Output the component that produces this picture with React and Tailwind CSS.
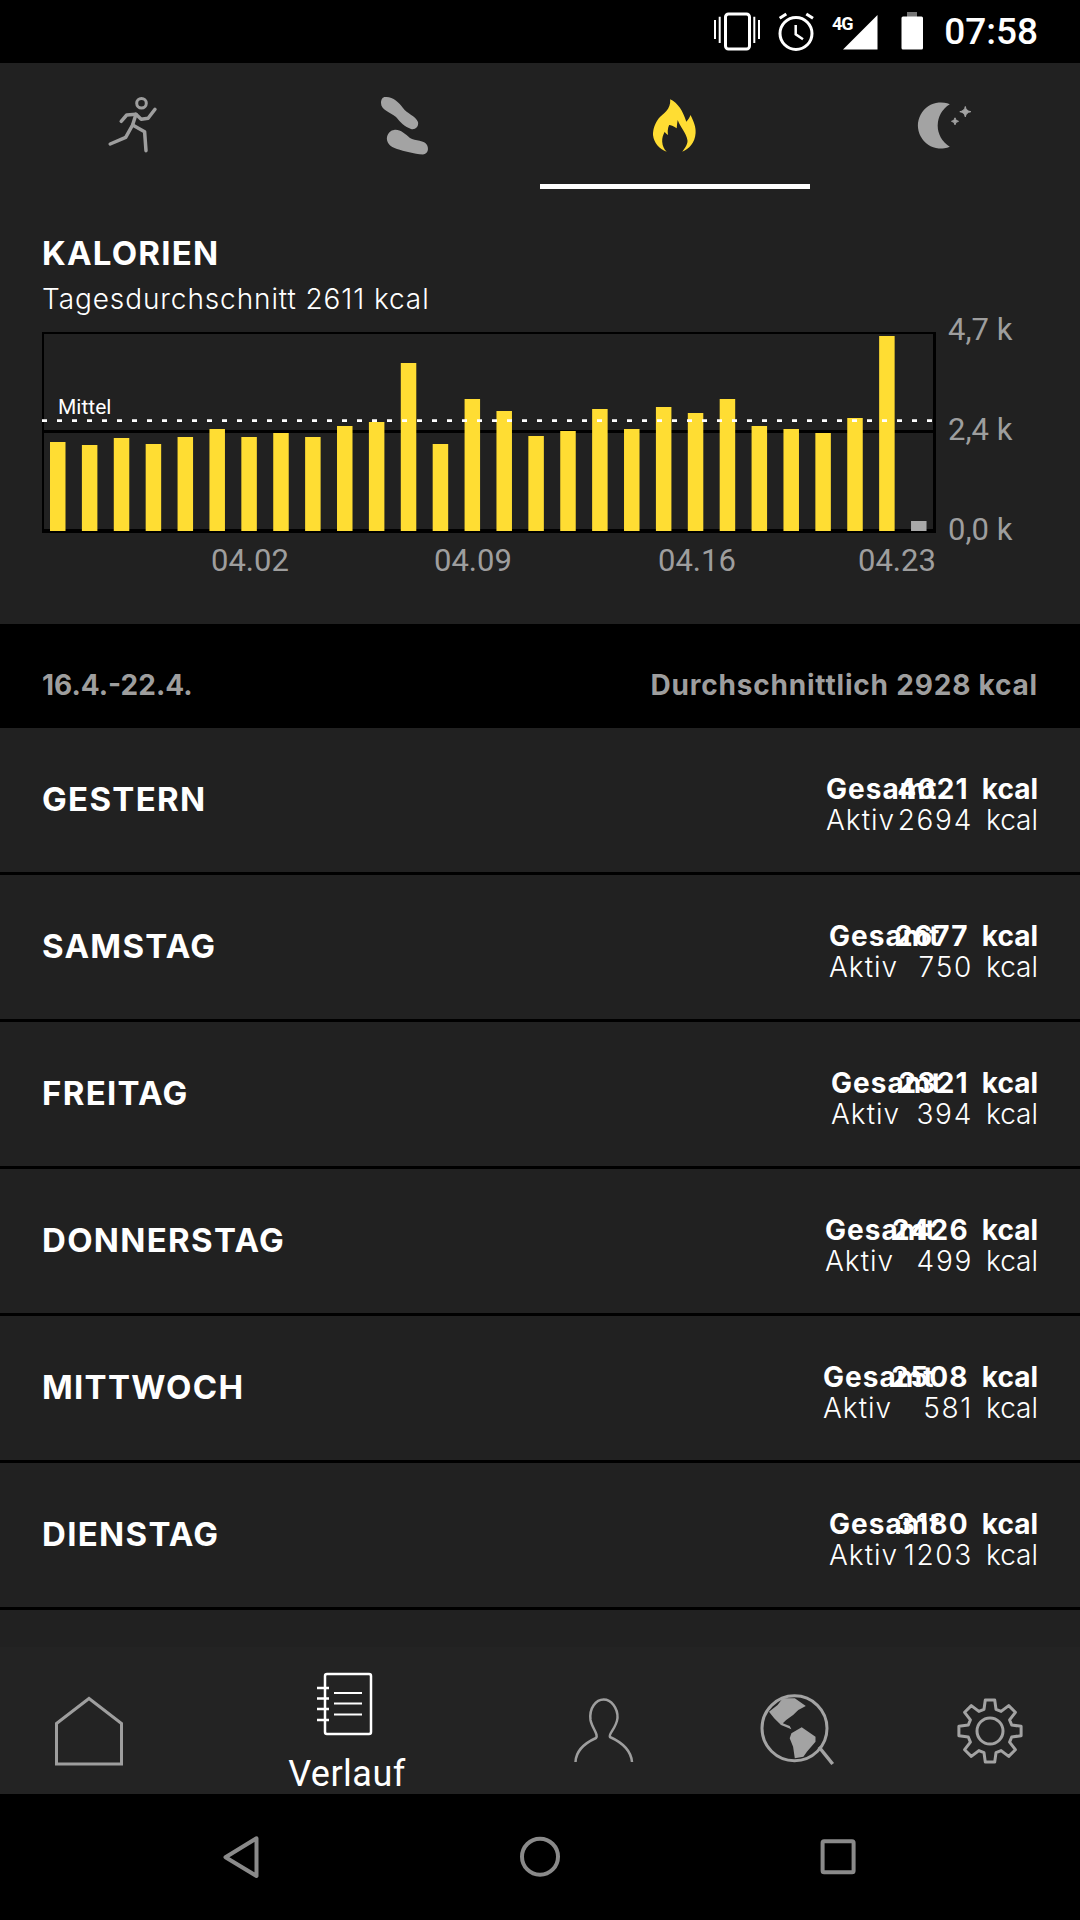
const font = { fontFamily: 'Inter, "Liberation Sans", sans-serif' }

// Daily bar tops in chart coordinates; the last day is still running, so it is grey.
const barTops = [442, 445, 438, 444, 437, 429, 437, 433, 437, 426, 422, 363, 444, 399, 411, 436, 431, 409, 429, 407, 413, 399, 426, 429, 433, 418, 336, 521]

const days = [
  { name: 'GESTERN', total: 4621, active: 2694, width: 212 },
  { name: 'SAMSTAG', total: 2677, active: 750, width: 209 },
  { name: 'FREITAG', total: 2321, active: 394, width: 207 },
  { name: 'DONNERSTAG', total: 2426, active: 499, width: 213 },
  { name: 'MITTWOCH', total: 2508, active: 581, width: 215 },
  { name: 'DIENSTAG', total: 3180, active: 1203, width: 209 },
]

function StatusIcons() {
  return (
    <svg width="220" height="63" viewBox="710 0 220 63" fill="none" aria-hidden="true">
      <rect x="726.5" y="14" width="24" height="35" rx="3" stroke="white" strokeWidth="3" />
      <path d="M716 20v19M720.7 16.7v26.3M755.3 16.7v26.3M760 20v19" stroke="white" strokeWidth="2" />
      <circle cx="797" cy="33.5" r="16" stroke="white" strokeWidth="3" />
      <path d="M780.7 18.3l6.6-4.3M814 18.3l-6.7-4.3" stroke="white" strokeWidth="3" />
      <path d="M796.7 25v9.3l7.3 5" stroke="white" strokeWidth="2.5" />
      <text x="833" y="29.5" fill="white" fontFamily="Roboto" fontWeight="700" fontSize="18" letterSpacing="-1">4G</text>
      <path d="M844 49.5L878.5 15v34.5z" fill="white" />
      <rect x="908" y="12" width="10" height="6" fill="#757575" />
      <rect x="902.5" y="16.5" width="21.5" height="33" rx="1.5" fill="white" />
    </svg>
  )
}

function RunnerIcon() {
  return (
    <svg width="80" height="80" viewBox="95 85 80 80" fill="none" stroke="#9e9e9e" strokeWidth="3.5" strokeLinecap="round" strokeLinejoin="round" aria-hidden="true">
      <circle cx="141.5" cy="103.3" r="4.8" strokeWidth="3" />
      <path d="M121.2 121.3l5.5-6.3 9.3-.7 5.2 5 6.9-1 6.9-9" />
      <path d="M136 114.3l-3.4 10.7-6.9 12.3-15.5 6.7" />
      <path d="M132.6 125l12 6.7 1.4 19" />
    </svg>
  )
}

function StepsIcon() {
  return (
    <svg width="80" height="80" viewBox="365 85 80 80" fill="#a3a3a3" aria-hidden="true">
      <path d="M385 97C392 96 399 102 403 108C406 113 416 116 418 122C419 127 415 130 411 129C405 127 400 122 396 117C390 112 381 110 381 103C381 99 383 97 385 97Z" />
      <path d="M394 130C400 129 405 134 410 138C415 141 425 140 427 145C429 149 428 154 423 154.5C414 154 404 151 397 149C390 147 386 142 387 137C388 133 391 130 394 130Z" />
    </svg>
  )
}

function FlameIcon() {
  return (
    <svg width="80" height="80" viewBox="635 85 80 80" fill="#ffdd33" aria-hidden="true">
      <path d="M670.2 99.3C678 103 683 111 686.3 121.7C688 120 689.5 118 690.5 115C694 122 696 127 695.6 133C695 143 689 149 682.2 151.7C686 147 688 143 687.4 140C686.5 133 680 127 677.7 120C677 124 677 126 676.7 128.3C673 126 671 125 669.1 125C667.5 129 667.5 132 668.1 135C666.5 134 665.5 133 664.7 131.7C663 135 662 138 662.2 141.7C662.5 146 664 149 666.7 151.7C659 149 654 143 653 135C653 128 655.5 123 658.8 118.3C663 113.5 671 110 670.2 99.3Z" />
    </svg>
  )
}

function MoonIcon() {
  return (
    <svg width="80" height="80" viewBox="905 85 80 80" fill="#a3a3a3" aria-hidden="true">
      <path d="M949.8 104.3A23 23 0 1 0 949.8 146.7A24.6 24.6 0 0 1 949.8 104.3Z" />
      <path d="M965.3 106.5Q966 111 970.8 111.7Q966 112.4 965.3 116.9Q964.6 112.4 959.8 111.7Q964.6 111 965.3 106.5Z" stroke="#a3a3a3" strokeWidth="1" />
      <path d="M955 117.8Q955.4 120.9 958.5 121.3Q955.4 121.7 955 124.8Q954.6 121.7 951.5 121.3Q954.6 120.9 955 117.8Z" stroke="#a3a3a3" strokeWidth="1" />
    </svg>
  )
}

function CalorieChart() {
  return (
    <svg width="1080" height="260" viewBox="0 320 1080 260" className="block overflow-visible" aria-hidden="true">
      <rect x="42" y="332" width="893" height="2" fill="black" />
      <rect x="42" y="430" width="893" height="3" fill="black" />
      <rect x="42" y="529" width="893" height="4" fill="black" />
      <rect x="42" y="332" width="2" height="201" fill="black" />
      <rect x="933" y="332" width="3" height="201" fill="black" />
      {barTops.map((top, i) => (
        <rect
          key={i}
          x={50 + i * 31.89}
          y={top}
          width="15.5"
          height={531 - top}
          fill={i === barTops.length - 1 ? '#a8a8a8' : '#ffdd33'}
        />
      ))}
      <path d="M42 420.7H933" stroke="white" strokeWidth="2.7" strokeDasharray="5 10" />
      <text x="58" y="414" fill="white" fontFamily="Roboto" fontSize="21">Mittel</text>
      <g fill="#9e9e9e" fontFamily="Roboto" fontSize="31">
        <text x="211" y="571">04.02</text>
        <text x="434" y="571">04.09</text>
        <text x="658" y="571">04.16</text>
        <text x="858" y="571">04.23</text>
        <text x="948" y="340">4,7 k</text>
        <text x="948" y="440">2,4 k</text>
        <text x="948" y="540">0,0 k</text>
      </g>
    </svg>
  )
}

function DayRow({ day }) {
  return (
    <div className="h-[147px] border-b-[3px] border-black flex items-center justify-between pl-[42px] pr-[42px]">
      <span className="text-[33px] font-bold text-white tracking-[1.3px]">{day.name}</span>
      <div className="flex flex-col pt-[10px]" style={{ width: day.width }}>
        <div className="relative flex justify-end items-baseline h-[31px] leading-[31px] text-[28px] font-bold text-white">
          <span className="absolute left-0 tracking-[1px]">Gesamt</span>
          <span className="tracking-[1.2px]">{day.total}</span>
          <span className="ml-[13px]">kcal</span>
        </div>
        <div className="relative flex justify-end items-baseline h-[31px] leading-[31px] text-[28px] font-light text-white">
          <span className="absolute left-0 tracking-[1px]">Aktiv</span>
          <span className="tracking-[1.7px]">{day.active}</span>
          <span className="ml-[13px]">kcal</span>
        </div>
      </div>
    </div>
  )
}

function gearPath(cx, cy, outer, root) {
  const pts = []
  for (let i = 0; i < 8; i++) {
    const a = (i * Math.PI) / 4 - Math.PI / 2
    const at = (r, d) => `${(cx + r * Math.cos(a + d)).toFixed(1)} ${(cy + r * Math.sin(a + d)).toFixed(1)}`
    pts.push(at(root, -0.27), at(outer, -0.15), at(outer, 0.15), at(root, 0.27))
  }
  return `M${pts.join('L')}Z`
}

function BottomNav() {
  return (
    <nav className="h-[147px] bg-[#232323] grid grid-cols-[178px_338px_176px_208px_180px]" style={font}>
      <div className="flex justify-center pt-[43px]">
        <svg width="80" height="80" viewBox="49 1690 80 80" fill="none" stroke="#9e9e9e" strokeWidth="3" aria-hidden="true">
          <path d="M56.5 1723.5L89 1698.5l32.5 25v40.5h-65z" />
        </svg>
      </div>
      <div className="flex flex-col items-center pt-[23px]">
        <svg width="80" height="68" viewBox="307 1670 80 68" fill="none" stroke="white" aria-hidden="true">
          <rect x="325" y="1674" width="46" height="60" rx="2" strokeWidth="2.5" />
          <path d="M317 1688h12M317 1698.5h12M317 1709h12M317 1720h12" strokeWidth="2.5" />
          <path d="M334 1693h28M334 1703.5h28M334 1714.5h28" strokeWidth="2" />
        </svg>
        <span className="mt-[15px] leading-[42px] text-[36px] tracking-[0.5px] text-white" style={{ fontFamily: 'Roboto, sans-serif' }}>Verlauf</span>
      </div>
      <div className="flex justify-center pt-[43px]">
        <svg width="80" height="80" viewBox="564 1690 80 80" fill="none" stroke="#9e9e9e" strokeWidth="2.5" aria-hidden="true">
          <path d="M575.5 1762C576 1750 585 1743 596 1738C599 1735 592 1728 590.5 1720C589 1708 596 1699.5 603.7 1699.5C611 1699.5 618 1708 617.5 1718C616.5 1728 608 1734 610 1737C621 1742 631 1750 632 1762" />
        </svg>
      </div>
      <div className="flex justify-center pt-[43px]">
        <svg width="80" height="80" viewBox="756 1690 80 80" fill="none" aria-hidden="true">
          <circle cx="794.5" cy="1728.3" r="32.5" stroke="#a3a3a3" strokeWidth="3" />
          <path d="M819 1747l13.7 17" stroke="#a3a3a3" strokeWidth="3.5" />
          <path fill="#a3a3a3" d="M769 1711.7L777.6 1705L782.8 1698.3L794.8 1698.3L805.8 1706L798.3 1710L793.1 1715L786.2 1720L782.8 1723.3L789.7 1726L791.4 1729.3L781 1725L774.2 1718.3Z" />
          <path fill="#a3a3a3" d="M791.4 1733.3L801.7 1727.3L815.5 1736.7L815.5 1741.7L806.9 1751.7L803.4 1756.7L794.8 1758.3L793.1 1746.7L789.7 1738.3Z" />
        </svg>
      </div>
      <div className="flex justify-center pt-[43px]">
        <svg width="80" height="80" viewBox="950 1690 80 80" fill="none" stroke="#a3a3a3" strokeWidth="3" strokeLinejoin="round" aria-hidden="true">
          <path d={gearPath(990, 1731, 31.5, 22.5)} />
          <circle cx="990" cy="1731" r="13" />
        </svg>
      </div>
    </nav>
  )
}

function AndroidBar() {
  return (
    <div className="h-[126px] bg-black flex justify-center">
      <svg width="1080" height="126" viewBox="0 1794 1080 126" fill="none" stroke="#8a8a8a" strokeWidth="4" strokeLinejoin="round" aria-hidden="true">
        <path d="M256.5 1838.3L225.5 1857.3L256.5 1876Z" />
        <circle cx="540" cy="1856.7" r="18" />
        <rect x="822.6" y="1841.3" width="31" height="31" rx="1.5" />
      </svg>
    </div>
  )
}

export default function App() {
  return (
    <div className="w-[1080px] h-[1920px] bg-[#212121] overflow-hidden" style={font}>
      <div className="h-[63px] bg-black flex items-center justify-end pr-[42px]">
        <StatusIcons />
        <span className="ml-[15px] text-[37px] font-medium text-white" style={{ fontFamily: 'Roboto, sans-serif' }}>07:58</span>
      </div>

      <div className="grid grid-cols-4 h-[126px]">
        <div className="flex justify-center pt-[22px]"><RunnerIcon /></div>
        <div className="flex justify-center pt-[22px]"><StepsIcon /></div>
        <div className="flex justify-center pt-[22px] border-b-[5px] border-white"><FlameIcon /></div>
        <div className="flex justify-center pt-[22px]"><MoonIcon /></div>
      </div>

      <section className="h-[435px]">
        <div className="h-[131px] pl-[42px] pt-[44px]">
          <h1 className="text-[33px] leading-[40px] font-bold tracking-[1.2px] text-white">KALORIEN</h1>
          <p className="mt-[8px] text-[28px] leading-[36px] font-light tracking-[0.9px] text-white">Tagesdurchschnitt 2611 kcal</p>
        </div>
        <CalorieChart />
      </section>

      <div className="h-[104px] bg-black flex items-center justify-between pl-[42px] pr-[42px] pt-[17px] text-[28px] font-bold text-[#9e9e9e]">
        <span>16.4.-22.4.</span>
        <span className="tracking-[0.8px]">Durchschnittlich 2928 kcal</span>
      </div>

      {days.map((day) => (
        <DayRow key={day.name} day={day} />
      ))}

      <div className="h-[37px]" />
      <BottomNav />
      <AndroidBar />
    </div>
  )
}
